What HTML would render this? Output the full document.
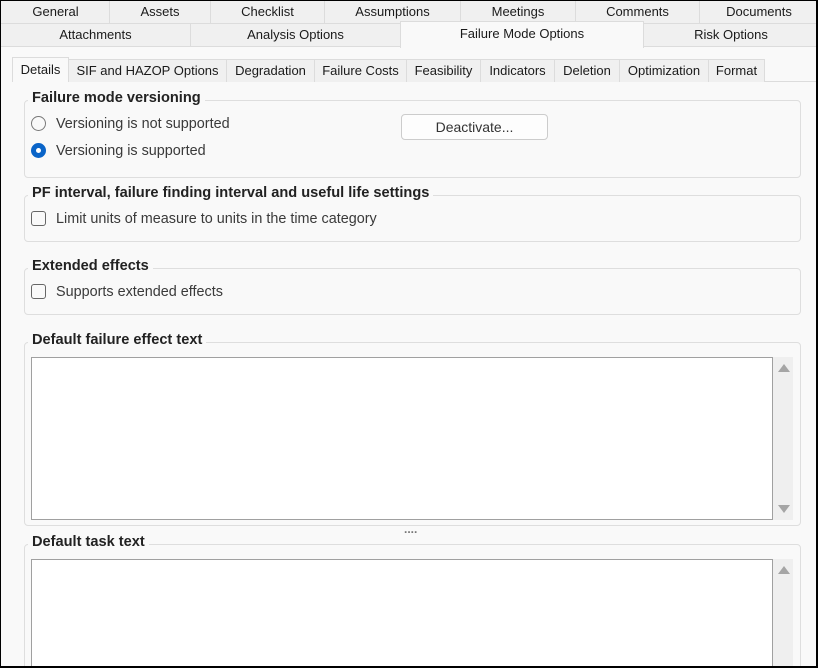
<!DOCTYPE html>
<html><head><style>
*{box-sizing:border-box;margin:0;padding:0}
body{width:818px;height:668px;overflow:hidden;background:#fff;font-family:"Liberation Sans",sans-serif;font-size:13px;color:#1a1a1a;position:relative}
#f{position:absolute;left:0;top:0;width:818px;height:668px;border:1px solid #000;border-right-width:2px;border-bottom-width:2px;background:#f9f9f9;overflow:hidden}
.a{position:absolute}
.t{position:absolute;background:#f0f0f0;border:1px solid #dcdcdc;text-align:center;font-size:13px;line-height:21px}
.st{position:absolute;top:59px;height:23px;background:#f0f0f0;border:1px solid #dcdcdc;border-bottom:none;text-align:center;line-height:22px;font-size:13px}
.g{position:absolute;border:1px solid #dedede;border-radius:4px}
.gt{position:absolute;background:#f9f9f9;font-weight:bold;font-size:14.6px;padding:0 4px 0 4px;color:#222;line-height:17px}
.lbl{position:absolute;font-size:14.4px;color:#3a3a3a;line-height:17px}
.cb{position:absolute;width:15px;height:15px;border:1px solid #666;border-radius:3px;background:#f9f9f9}
.ta{position:absolute;background:#fff;border:1px solid #a0a0a0}
.sb{position:absolute;background:#efefef}
</style></head><body><div id="f">
<div class="t" style="left:-1px;top:-1px;width:111px;height:24px">General</div>
<div class="t" style="left:108px;top:-1px;width:102px;height:24px">Assets</div>
<div class="t" style="left:209px;top:-1px;width:115px;height:24px">Checklist</div>
<div class="t" style="left:323px;top:-1px;width:137px;height:24px">Assumptions</div>
<div class="t" style="left:459px;top:-1px;width:116px;height:24px">Meetings</div>
<div class="t" style="left:574px;top:-1px;width:125px;height:24px">Comments</div>
<div class="t" style="left:698px;top:-1px;width:120px;height:24px">Documents</div>
<div class="t" style="left:-1px;top:22px;width:191px;height:24px">Attachments</div>
<div class="t" style="left:189px;top:22px;width:211px;height:24px">Analysis Options</div>
<div class="t" style="left:399px;top:20px;width:244px;height:27px;background:#f9f9f9;border-bottom:none;line-height:23px">Failure Mode Options</div>
<div class="t" style="left:642px;top:22px;width:176px;height:24px">Risk Options</div>

<div class="a" style="left:11px;top:80px;width:806px;height:1px;background:#dcdcdc"></div>
<div class="st" style="left:11px;top:56px;height:25px;width:57px;background:#f9f9f9;line-height:24px">Details</div>
<div class="st" style="left:67px;top:58px;width:159px">SIF and HAZOP Options</div>
<div class="st" style="left:225px;top:58px;width:89px">Degradation</div>
<div class="st" style="left:313px;top:58px;width:93px">Failure Costs</div>
<div class="st" style="left:405px;top:58px;width:75px">Feasibility</div>
<div class="st" style="left:479px;top:58px;width:75px">Indicators</div>
<div class="st" style="left:553px;top:58px;width:66px">Deletion</div>
<div class="st" style="left:618px;top:58px;width:90px">Optimization</div>
<div class="st" style="left:707px;top:58px;width:57px">Format</div>

<div class="g" style="left:23px;top:99px;width:777px;height:78px"></div>
<div class="gt" style="left:27px;top:89px">Failure mode versioning</div>
<div class="a" style="left:30px;top:115px;width:15px;height:15px;border:1px solid #777;border-radius:50%;background:#f9f9f9"></div>
<div class="lbl" style="left:55px;top:115px">Versioning is not supported</div>
<div class="a" style="left:30px;top:142px;width:15px;height:15px;border-radius:50%;background:#0a64c8"><div class="a" style="left:5px;top:5px;width:5px;height:5px;border-radius:50%;background:#fff"></div></div>
<div class="lbl" style="left:55px;top:142px">Versioning is supported</div>
<div class="a" style="left:400px;top:113px;width:147px;height:26px;border:1px solid #ccc;border-radius:4px;background:#fdfdfd;text-align:center;line-height:25px;font-size:14px;color:#333">Deactivate...</div>

<div class="g" style="left:23px;top:194px;width:777px;height:47px"></div>
<div class="gt" style="left:27px;top:184px">PF interval, failure finding interval and useful life settings</div>
<div class="cb" style="left:30px;top:210px"></div>
<div class="lbl" style="left:55px;top:210px">Limit units of measure to units in the time category</div>

<div class="g" style="left:23px;top:267px;width:777px;height:47px"></div>
<div class="gt" style="left:27px;top:257px">Extended effects</div>
<div class="cb" style="left:30px;top:283px"></div>
<div class="lbl" style="left:55px;top:283px">Supports extended effects</div>

<div class="g" style="left:23px;top:341px;width:777px;height:184px"></div>
<div class="gt" style="left:27px;top:331px">Default failure effect text</div>
<div class="ta" style="left:30px;top:356px;width:742px;height:163px"></div>
<div class="sb" style="left:772px;top:356px;width:20px;height:163px"></div>
<div class="a" style="left:777px;top:363px;width:0;height:0;border-left:6px solid transparent;border-right:6px solid transparent;border-bottom:8px solid #a5a5a5"></div>
<div class="a" style="left:777px;top:504px;width:0;height:0;border-left:6px solid transparent;border-right:6px solid transparent;border-top:8px solid #a5a5a5"></div>
<div class="a" style="left:403px;top:521px;font-size:12px;font-weight:bold;color:#777">....</div>

<div class="g" style="left:23px;top:543px;width:777px;height:140px"></div>
<div class="gt" style="left:27px;top:533px">Default task text</div>
<div class="ta" style="left:30px;top:558px;width:742px;height:120px"></div>
<div class="sb" style="left:772px;top:558px;width:20px;height:120px"></div>
<div class="a" style="left:777px;top:565px;width:0;height:0;border-left:6px solid transparent;border-right:6px solid transparent;border-bottom:8px solid #a5a5a5"></div>
</div></body></html>
